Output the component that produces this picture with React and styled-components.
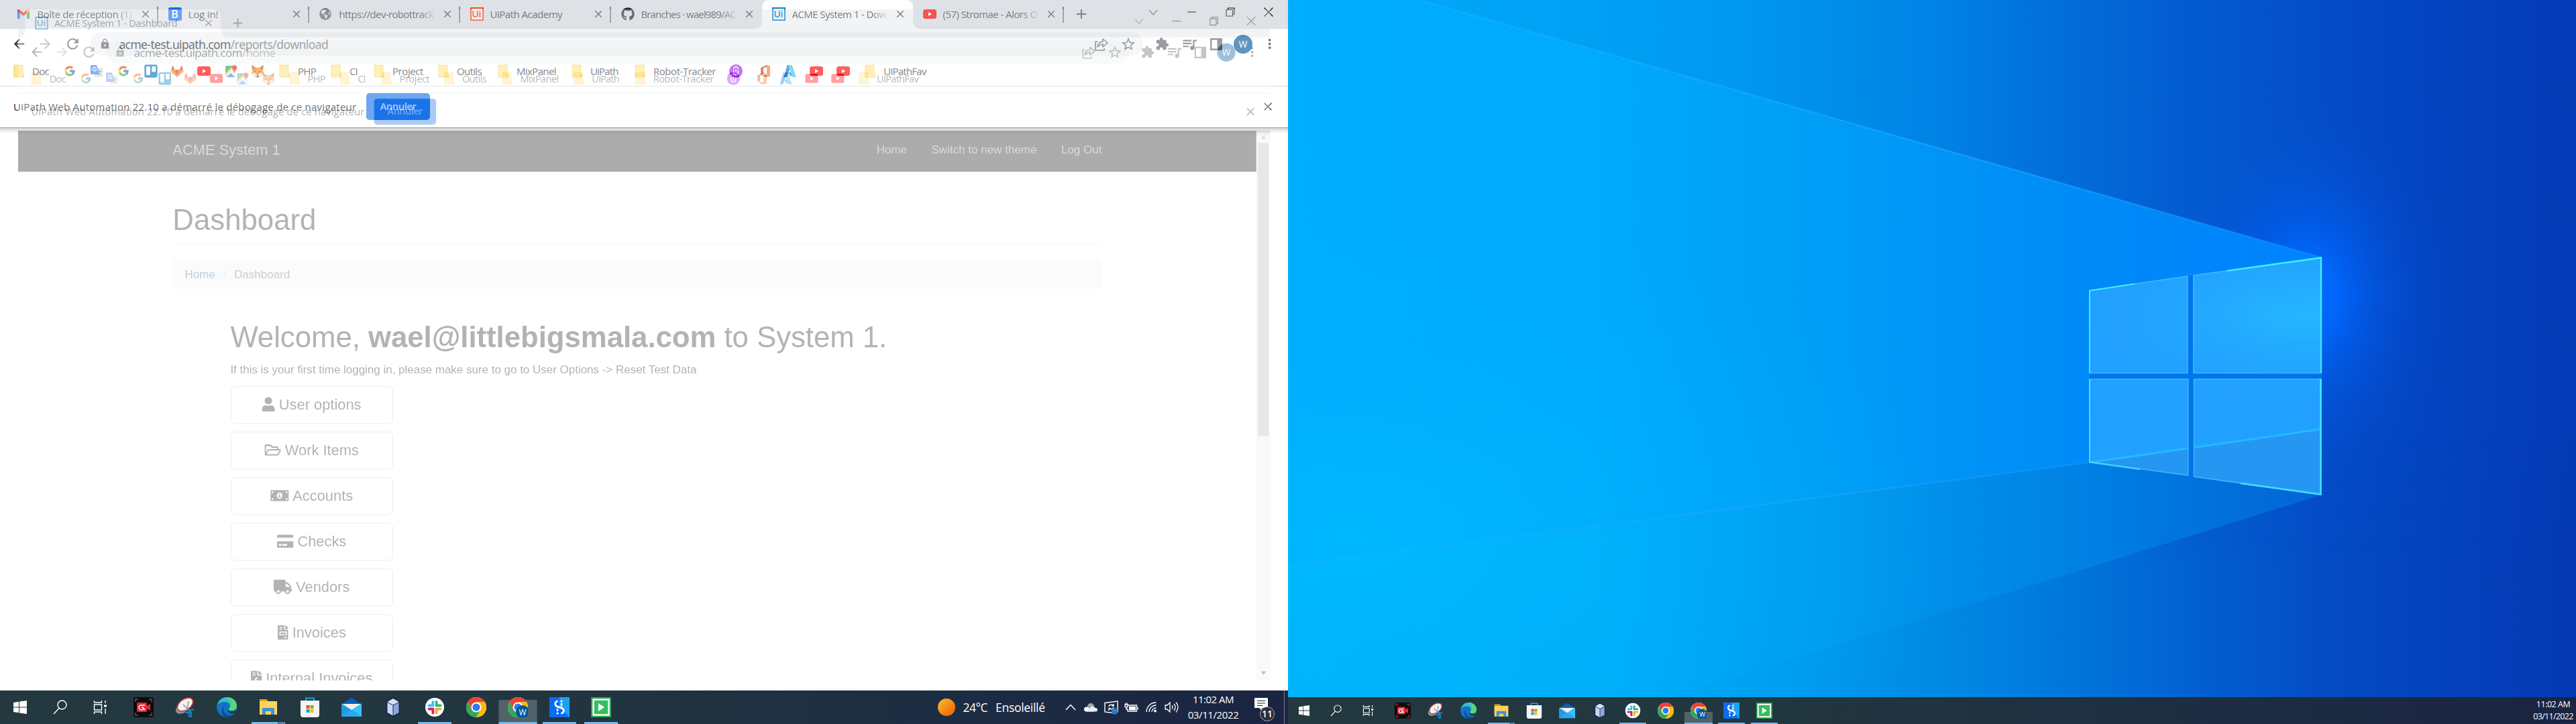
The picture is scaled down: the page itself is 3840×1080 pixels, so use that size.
import React, { useLayoutEffect, useRef, useState } from 'react';
import styled, { createGlobalStyle, css } from 'styled-components';
import {
  FaUser, FaRegFolderOpen, FaMoneyBillAlt, FaCreditCard, FaTruck, FaFileInvoice,
  FaFileInvoiceDollar, FaGithub, FaTrello, FaGlobeAmericas,
} from 'react-icons/fa';
import {
  MdLock, MdRefresh, MdArrowBack, MdArrowForward, MdStarBorder, MdExtension,
  MdQueueMusic, MdMoreVert, MdClose, MdAdd,
} from 'react-icons/md';
import { FcGoogle } from 'react-icons/fc';

const ui = `"Open Sans", "Noto Sans", sans-serif`;
const arial = `"Liberation Sans", Arial, sans-serif`;

const Global = createGlobalStyle`
  *, *::before, *::after { box-sizing: border-box; }
  html, body { margin: 0; padding: 0; }
  body { width: 3840px; height: 1080px; overflow: hidden; background: #fff; font-family: ${ui}; }
  svg { display: block; flex: none; }
`;

/* ---------- text that keeps a given advance width ---------- */

const FitSpan = styled.span`
  display: inline-block;
  flex: none;
  white-space: pre;
`;

function Fit({ w, children }) {
  const ref = useRef(null);
  const [spacing, setSpacing] = useState(0);
  useLayoutEffect(() => {
    const text = String(children);
    const natural = ref.current.offsetWidth;
    setSpacing((w - natural) / text.length);
  }, [w, children]);
  return <FitSpan ref={ref} style={{ letterSpacing: `${spacing}px` }}>{children}</FitSpan>;
}

/* ---------- small logos ---------- */

const Gmail = () => (
  <svg width="18" height="14" viewBox="0 0 18 14">
    <path d="M0 2v11.2c0 .5.3.8.8.8H4V5z" fill="#4285f4" />
    <path d="M18 2v11.2c0 .5-.3.8-.8.8H14V5z" fill="#34a853" />
    <path d="M14 1.2V6l4-3V1.8C18 .2 16.400-.5 15.200.3z" fill="#fbbc04" />
    <path d="M4 6V1.200l5 3.800 5-3.800V6L9 9.800z" fill="#ea4335" />
    <path d="M0 1.800V3l4 3V1.200L2.800.3C1.600-.5 0 .2 0 1.800z" fill="#c5221f" />
  </svg>
);

const BadgeB = styled.span`
  width: 20px; height: 20px; border-radius: 3px; background: #1668f2; color: #fff;
  font: 600 16px/20px ${ui}; text-align: center; flex: none;
`;

const UiSquare = styled.span`
  width: 20px; height: 20px; border: 2px solid ${p => p.$c}; color: ${p => p.$c};
  background: #fff; font: 700 14px/16px ${arial}; text-align: center; flex: none;
`;

const YouTube = () => (
  <svg width="20" height="20" viewBox="0 0 20 20">
    <rect y="3" width="20" height="14" rx="3.500" fill="#f00" />
    <path d="M8 7l5.200 3L8 13z" fill="#fff" />
  </svg>
);

const Folder = () => (
  <svg width="16" height="20" viewBox="0 0 16 20">
    <path d="M1 1h13v14h1.500v4H1z" fill="#ffe68f" stroke="#f5d565" strokeWidth="1" />
    <path d="M13 14.500c1.500-.5 2.500.5 2 4.500h-2z" fill="#ffd95e" />
  </svg>
);

const Translate = () => (
  <svg width="20" height="20" viewBox="0 0 20 20">
    <rect x="7" y="5" width="12" height="14" rx="1" fill="#dadce0" />
    <path d="M10 10h7M13.500 8.500V10m2.500 0c-.5 2.500-3 4.500-4.500 5.500M11.500 11.500c1 2 2.500 3.500 4.500 4" stroke="#607d8b" fill="none" />
    <path d="M1 1h9l4 14H1z" fill="#4285f4" />
    <path d="M9.200 5.700a2.700 2.700 0 1 0 .5 2.300H7.200" stroke="#fff" strokeWidth="1.200" fill="none" />
  </svg>
);

const Gitlab = () => (
  <svg width="20" height="20" viewBox="0 0 20 20">
    <path d="M10 19L13.700 8H6.300z" fill="#e24329" />
    <path d="M10 19L6.300 8H1z" fill="#fc6d26" />
    <path d="M10 19L13.700 8H19z" fill="#fc6d26" />
    <path d="M1 8l-.9 3.200L10 19zM19 8l.9 3.200L10 19z" fill="#fca326" />
    <path d="M1 8L3.600 1l2.700 7zM19 8l-2.600-7-2.700 7z" fill="#e24329" />
  </svg>
);

const Maps = () => (
  <svg width="20" height="20" viewBox="0 0 20 20">
    <rect x="1" y="2" width="15" height="17" rx="2" fill="#34a853" />
    <path d="M1 17L12 5l4 4v8l-2 2H2z" fill="#eceff1" />
    <path d="M3 19l6-6 6 6z" fill="#4285f4" />
    <path d="M1 15L13 3" stroke="#fdd835" strokeWidth="2" />
    <path d="M14.500 1a4 4 0 0 1 4 4c0 3-3.500 4-4 9-.5-5-4-6-4-9a4 4 0 0 1 4-4z" fill="#ea4335" />
    <circle cx="14.500" cy="5" r="1.400" fill="#7b1a12" />
  </svg>
);

const Fox = () => (
  <svg width="20" height="20" viewBox="0 0 20 20">
    <path d="M1 1l6 4h6l6-4-1 9 1 4-4 4-5 2-5-2-4-4 1-4z" fill="#f6851b" />
    <path d="M1 1l6 4-4 3zM19 1l-6 4 4 3z" fill="#b5571b" />
    <path d="M1 14l5-2 3 4v3l-4-1zM19 14l-5-2-3 4v3l4-1z" fill="#eadfd4" />
    <path d="M6 10l2 1.500-2 .5zM14 10l-2 1.500 2 .5zM8.500 17h3l-.5 2H9z" fill="#2b2b33" />
  </svg>
);

const Purple = () => (
  <svg width="20" height="20" viewBox="0 0 20 20">
    <circle cx="10" cy="10" r="10" fill="#a020f0" />
    <path d="M6.500 8.500V12a3.500 3.500 0 0 0 7 0V8.500M10 13V7M6.500 7a3.500 3.500 0 0 1 7 0" fill="none" stroke="#fff" strokeWidth="1.500" />
  </svg>
);

const Office = () => (
  <svg width="16" height="20" viewBox="0 0 16 20">
    <path d="M1 5l9-4 5 1.500v15L10 19l-9-3.500 9 1V4L5 5.500v8L1 15z" fill="#d83b01" />
    <path d="M10 1l5 1.500v15L10 19z" fill="#f0803c" />
  </svg>
);

const Azure = () => (
  <svg width="20" height="20" viewBox="0 0 20 20">
    <path d="M6.500 1h6L6 19H1.500z" fill="#0f6fc0" />
    <path d="M8 12h8l3 7-8-2z" fill="#0078d4" />
    <path d="M8 1h5.500L20 19h-6z" fill="#3cc1f3" />
  </svg>
);

const Share = () => (
  <svg width="22" height="20" viewBox="0 0 22 20" fill="none" stroke="#5f6368" strokeWidth="1.600">
    <path d="M5 6H2v13h13v-3M13 2l7 6-7 6v-4c-4 0-6 1.500-8 4 .5-5 3.500-8 8-8z" strokeLinejoin="round" />
  </svg>
);

const SidePanel = () => (
  <svg width="18" height="18" viewBox="0 0 18 18">
    <path d="M0 0h18v18H0zM2.400 2.400v13.200h8.100V2.400z" fill="#5f6368" fillRule="evenodd" />
  </svg>
);

const icons = {
  gmail: <Gmail />,
  b: <BadgeB>B</BadgeB>,
  globe: <FaGlobeAmericas size={18} color="#5f6368" />,
  uiRed: <UiSquare $c="#fa4616">Ui</UiSquare>,
  uiBlue: <UiSquare $c="#0085ca">Ui</UiSquare>,
  github: <FaGithub size={20} color="#24292f" />,
  youtube: <YouTube />,
  folder: <Folder />,
  google: <FcGoogle size={18} />,
  translate: <Translate />,
  trello: <FaTrello size={22} color="#0079bf" />,
  gitlab: <Gitlab />,
  maps: <Maps />,
  fox: <Fox />,
  purple: <Purple />,
  office: <Office />,
  azure: <Azure />,
};

/* ---------- browser window ---------- */

const Window = styled.section`
  position: absolute;
  inset: 0 auto auto 0;
  width: 1920px;
  height: 1030px;
  display: flex;
  flex-direction: column;
  overflow: hidden;
  background: #fff;
  color: #3c4043;
  ${p => p.$ghost && css`
    opacity: 0.37;
    transform-origin: 0 0;
    transform: translate(27px, 14px) scale(0.972);
  `}
`;

const TabStrip = styled.header`
  height: 43px;
  flex: none;
  display: flex;
  align-items: stretch;
  padding-left: 10.5px;
  background: #dee1e6;
`;

const TabBox = styled.div`
  position: relative;
  width: ${p => p.$w}px;
  flex: none;
  display: flex;
  align-items: center;
  padding: 0 10px 1px 15px;
  font-size: 15px;
  ${p => p.$active && css`
    background: #fff;
    border-radius: 10px 10px 0 0;
    &::before, &::after {
      content: '';
      position: absolute;
      bottom: 0;
      width: 10px;
      height: 10px;
    }
    &::before { left: -10px; background: radial-gradient(circle at 0 0, transparent 9.5px, #fff 10px); }
    &::after { right: -10px; background: radial-gradient(circle at 100% 0, transparent 9.5px, #fff 10px); }
  `}
`;

const TabDivider = styled.i`
  position: absolute;
  right: 0;
  top: 10px;
  width: 1.500px;
  height: 24px;
  background: #80868b;
`;

const IconSlot = styled.span`
  width: ${p => p.$w || 30}px;
  flex: none;
  display: flex;
  align-items: center;
`;

const TabTitle = styled.span`
  flex: 1;
  min-width: 0;
  white-space: nowrap;
  ${p => p.$fade && css`mask-image: linear-gradient(90deg, #000 84%, rgba(0, 0, 0, .12) 100%);`}
`;

const TabClose = styled(MdClose)`
  width: 18px;
  height: 18px;
  margin-left: 10px;
  color: #45494d;
  flex: none;
`;

const NewTab = styled(MdAdd)`
  width: 24px;
  height: 24px;
  margin: 9px 0 0 14px;
  color: #45494d;
`;

const Controls = styled.div`
  display: flex;
  margin: 0 0 0 auto;
  height: 36px;
`;

const Control = styled.span`
  width: 57.500px;
  display: grid;
  place-items: center;
`;

const Toolbar = styled.div`
  height: 45px;
  flex: none;
  display: flex;
  align-items: center;
  background: #fff;
  padding-left: 17px;
`;

const NavIcon = styled.span`
  width: 39.300px;
  flex: none;
  color: ${p => (p.$dim ? '#a8abaf' : p.$soft ? '#5f6368' : '#303336')};
`;

const Omnibox = styled.div`
  width: 1569px;
  height: 35px;
  flex: none;
  display: flex;
  align-items: center;
  border-radius: 18px;
  background: #f1f3f4;
  padding: 0 10px 0 13px;
  font-size: 17.500px;
  color: #202124;
`;

const Path = styled.span`color: #6a6e73;`;

const OmniTail = styled.span`
  margin-left: auto;
  display: flex;
  align-items: center;
  gap: 17px;
  color: #5f6368;
`;

const Extensions = styled.div`
  display: flex;
  align-items: center;
  color: #5f6368;
  margin-left: 9px;
`;

const Ext = styled.span`
  width: 40px;
  display: grid;
  place-items: center;
`;

const Avatar = styled.span`
  width: 28px;
  height: 28px;
  border-radius: 50%;
  background: #01579b;
  color: #fff;
  font-size: 14px;
  line-height: 28px;
  text-align: center;
`;

const Bookmarks = styled.nav`
  height: 41px;
  flex: none;
  display: flex;
  align-items: center;
  padding: 0 0 5px 20px;
  border-bottom: 1px solid #d5d7da;
  background: #fff;
  font-size: 15px;
`;

const Bookmark = styled.span`
  width: ${p => p.$w}px;
  flex: none;
  display: flex;
  align-items: center;
`;

const InfoBar = styled.div`
  height: ${p => p.$h}px;
  flex: none;
  display: flex;
  align-items: center;
  padding: 0 20px 1px;
  background: #fff;
  font-size: 15px;
  color: #202124;
`;

const CancelButton = styled.button`
  width: 95px;
  height: 40px;
  margin-left: 15px;
  padding: 0 0 2px 20px;
  border: 0;
  border-radius: 5px;
  background: #1a73e8;
  color: #fff;
  font: 600 15px ${ui};
  display: flex;
  align-items: center;
`;

const InfoClose = styled(MdClose)`
  width: 20px;
  height: 20px;
  margin-left: auto;
  color: #3c4043;
`;

const Viewport = styled.div`
  position: relative;
  flex: 1;
  min-height: 0;
  display: flex;
  overflow: hidden;
  background: #fff;
  &::before {
    content: '';
    position: absolute;
    z-index: 2;
    inset: 0 0 auto 0;
    height: 10px;
    background: linear-gradient(rgba(0,0,0,.38) 0 1px, rgba(0,0,0,.16) 1.500px, rgba(0,0,0,.05) 6px, transparent);
  }
`;

const leadingTabs = [
  { icon: 'gmail', title: 'Boîte de réception (1)', w: 141, fade: true },
  { icon: 'b', title: 'Log in!', w: 45 },
  { icon: 'globe', title: 'https://dev-robottrack', w: 141, fade: true },
  { icon: 'uiRed', title: 'UiPath Academy', w: 108 },
  { icon: 'github', title: 'Branches · wael989/AC', w: 141, fade: true, last: true },
  { icon: 'uiBlue', title: 'ACME System 1 - Dow', w: 141, fade: true, active: true },
  { icon: 'youtube', title: '(57) Stromae - Alors O', w: 141, fade: true },
];

const ghostTabs = [
  { icon: 'uiBlue', title: 'ACME System 1 - Dashboard', w: 189, active: true },
];

const bookmarks = [
  ['folder', 75, 'Doc', 25], ['google', 39], ['translate', 41], ['google', 39], ['trello', 40],
  ['gitlab', 40], ['youtube', 41], ['maps', 39], ['fox', 42],
  ['folder', 77, 'PHP', 27], ['folder', 64, 'CI', 12], ['folder', 96, 'Project', 46],
  ['folder', 89, 'Outils', 37], ['folder', 110, 'MixPanel', 59], ['folder', 94, 'UiPath', 42],
  ['folder', 141, 'Robot-Tracker', 93], ['purple', 46], ['office', 34], ['azure', 40],
  ['youtube', 40], ['youtube', 42], ['folder', 100, 'UIPathFav', 64],
];

function Browser({ ghost, tabs, tabWidth, path, pathWidth, infoHeight, children }) {
  return (
    <Window $ghost={ghost}>
      <TabStrip>
        {tabs.map(t => (
          <TabBox key={t.title} $w={tabWidth} $active={t.active}>
            <IconSlot>{icons[t.icon]}</IconSlot>
            <TabTitle $fade={t.fade}><Fit w={t.w}>{t.title}</Fit></TabTitle>
            <TabClose />
            {!t.active && !t.last && <TabDivider />}
          </TabBox>
        ))}
        <NewTab />
        <Controls>
          <Control><svg width="14" height="9" viewBox="0 0 14 9" fill="none" stroke="#111"><path d="M1 1l6 7 6-7" /></svg></Control>
          <Control><svg width="13" height="2"><path d="M0 1h13" stroke="#111" strokeWidth="1.300" /></svg></Control>
          <Control><svg width="14" height="14" viewBox="0 0 14 14" fill="none" stroke="#111" strokeWidth="1.200"><path d="M1 3.500h9.500V13H1zM3.500 3.500V1H13v9.500h-2.500" /></svg></Control>
          <Control><svg width="14" height="14" viewBox="0 0 14 14" fill="none" stroke="#111" strokeWidth="1.200"><path d="M.5.500l13 13M13.500.500l-13 13" /></svg></Control>
        </Controls>
      </TabStrip>
      <Toolbar>
        <NavIcon><MdArrowBack size={23} /></NavIcon>
        <NavIcon $dim><MdArrowForward size={23} /></NavIcon>
        <NavIcon $soft><MdRefresh size={25} /></NavIcon>
        <Omnibox>
          <IconSlot $w={29.500}><MdLock size={17} color="#5f6368" /></IconSlot>
          <Fit w={166}>acme-test.uipath.com</Fit>
          <Path><Fit w={pathWidth}>{path}</Fit></Path>
          <OmniTail><Share /><MdStarBorder size={24} /></OmniTail>
        </Omnibox>
        <Extensions>
          <Ext><MdExtension size={21} /></Ext>
          <Ext><MdQueueMusic size={26} /></Ext>
          <Ext><SidePanel /></Ext>
          <Ext><Avatar>W</Avatar></Ext>
          <Ext><MdMoreVert size={23} color="#3c4043" /></Ext>
        </Extensions>
      </Toolbar>
      <Bookmarks>
        {bookmarks.map(([icon, w, label, lw], i) => (
          <Bookmark key={i} $w={w}>
            <IconSlot $w={28}>{icons[icon]}</IconSlot>
            {label && <Fit w={lw}>{label}</Fit>}
          </Bookmark>
        ))}
      </Bookmarks>
      <InfoBar $h={infoHeight}>
        <Fit w={511}>UiPath Web Automation 22.10 a démarré le débogage de ce navigateur</Fit>
        <CancelButton><Fit w={54}>Annuler</Fit></CancelButton>
        <InfoClose />
      </InfoBar>
      <Viewport>{children}</Viewport>
    </Window>
  );
}

/* ---------- ACME page ---------- */

const Page = styled.main`
  flex: 1;
  font-family: ${arial};
  font-size: 17.500px;
  line-height: 25px;
  color: #333;
`;

const NavBar = styled.div`
  height: 63px;
  display: flex;
  align-items: center;
  justify-content: space-between;
  padding: 0 237px 2px;
  background: #222;
  border-bottom: 1px solid #080808;
  color: #9d9d9d;
`;

const Brand = styled.span`font-size: 22.500px;`;

const NavLinks = styled.span`
  display: flex;
  gap: 37.500px;
`;

const Container = styled.div`
  width: 1425px;
  margin: 0 auto;
`;

const Title = styled.h1`
  margin: 0;
  padding: 49px 0 11px;
  font-weight: 400;
  font-size: 45px;
  line-height: 50px;
  border-bottom: 1px solid #eee;
`;

const Breadcrumb = styled.div`
  height: 44.400px;
  margin-top: 25.500px;
  padding: 0 18.750px;
  display: flex;
  align-items: center;
  gap: 12px;
  border-radius: 5px;
  background: #f5f5f5;
  color: #777;
`;

const Crumb = styled.span`color: ${p => p.$c};`;

const Panel = styled.div`
  padding: 50px 0 0 88.500px;
`;

const Welcome = styled.h1`
  margin: 0;
  font-weight: 400;
  font-size: 45px;
  line-height: 50px;
  letter-spacing: -.03px;
`;

const Hint = styled.p`
  margin: 12px 0 12px;
`;

const MenuList = styled.div`
  display: flex;
  flex-direction: column;
  gap: 12.400px;
`;

const MenuButton = styled.div`
  width: 249.500px;
  height: 57.600px;
  flex: none;
  display: flex;
  align-items: center;
  justify-content: center;
  gap: 6px;
  padding-bottom: 2px;
  border: 1.200px solid #ccc;
  border-radius: 7.500px;
  font-size: 22.500px;
  svg {
    width: ${p => p.$iconWidth}px;
    height: 22.500px;
  }
`;

const ScrollBar = styled.div`
  width: 21px;
  flex: none;
  display: flex;
  flex-direction: column;
  align-items: center;
  background: #f1f1f1;
  padding: 8px 0 9px;
`;

const Arrow = styled.i`
  border: 4.500px solid transparent;
  border-top-width: ${p => (p.$down ? 5.500 : 0)}px;
  border-bottom-width: ${p => (p.$down ? 0 : 5.500)}px;
  border-${p => (p.$down ? 'top' : 'bottom')}-color: ${p => (p.$down ? '#505050' : '#a3a3a3')};
`;

const Thumb = styled.i`
  width: 17px;
  height: 450px;
  margin: 6px 0 auto;
  background: #c1c1c1;
`;

const menu = [
  [FaUser, 'User options', 19.7], [FaRegFolderOpen, 'Work Items', 25.3], [FaMoneyBillAlt, 'Accounts', 28.1],
  [FaCreditCard, 'Checks', 25.3], [FaTruck, 'Vendors', 28.1], [FaFileInvoice, 'Invoices', 16.9],
  [FaFileInvoiceDollar, 'Internal Invoices', 16.9],
];

function Dashboard() {
  return (
    <>
      <Page>
        <NavBar>
          <Brand>ACME System 1</Brand>
          <NavLinks><span>Home</span><span>Switch to new theme</span><span>Log Out</span></NavLinks>
        </NavBar>
        <Container>
          <Title>Dashboard</Title>
          <Breadcrumb>
            <Crumb $c="#337ab7">Home</Crumb><Crumb $c="#ccc">/</Crumb><Crumb $c="#777">Dashboard</Crumb>
          </Breadcrumb>
          <Panel>
            <Welcome>Welcome, <b>wael@littlebigsmala.com</b> to System 1.</Welcome>
            <Hint><Fit w={715}>{'If this is your first time logging in, please make sure to go to User Options -> Reset Test Data'}</Fit></Hint>
            <MenuList>
              {menu.map(([Icon, label, iconWidth]) => (
                <MenuButton key={label} $iconWidth={iconWidth}>
                  <Icon preserveAspectRatio="xMidYMid slice" />{label}
                </MenuButton>
              ))}
            </MenuList>
          </Panel>
        </Container>
      </Page>
      <ScrollBar><Arrow /><Thumb /><Arrow $down /></ScrollBar>
    </>
  );
}

/* ---------- taskbar ---------- */

const Bar = styled.footer`
  position: relative;
  height: ${p => (p.$small ? 40 : 50)}px;
  flex: none;
  display: flex;
  align-items: stretch;
  background: linear-gradient(90deg, #23393f 0, #22363f 40%, #1c2c42 75%, #1b2443 100%);
  color: #fff;
`;

const Slot = styled.span`
  position: relative;
  width: ${p => p.$w}px;
  margin-left: ${p => p.$ml || 0}px;
  flex: none;
  display: grid;
  place-items: center;
`;

const Underline = styled.i`
  position: absolute;
  left: 50%;
  bottom: 0;
  width: ${p => (p.$small ? 40 : 50)}px;
  height: ${p => (p.$small ? 2 : 3)}px;
  transform: translateX(-50%);
  background: ${p => (p.$split ? 'linear-gradient(90deg, #76b9ed 79%, #48799f 79%, #5a8fb8)' : '#76b9ed')};
`;

const Highlight = styled.i`
  position: absolute;
  left: 50%;
  bottom: 0;
  width: ${p => (p.$small ? 42 : 57)}px;
  height: ${p => (p.$small ? 18 : 36)}px;
  transform: translateX(-50%);
  background: rgba(255, 255, 255, .22);
  border-bottom: ${p => (p.$small ? 2 : 3)}px solid #76b9ed;
`;

const AppSvg = styled.svg`
  position: relative;
  width: ${p => p.$s}px;
  height: ${p => p.$s}px;
`;

const chromeShapes = (
  <>
    <circle cx="15" cy="15" r="15" fill="#fff" />
    <path d="M2 7.500A15 15 0 0 1 28 7.500H15a7.500 7.500 0 0 0-6.500 11.200z" fill="#ea4335" />
    <path d="M28 7.500A15 15 0 0 1 15 30l6.500-11.300A7.500 7.500 0 0 0 15 7.500z" fill="#fbbc05" />
    <path d="M15 30A15 15 0 0 1 2 7.500l6.500 11.200a7.500 7.500 0 0 0 13 0z" fill="#34a853" />
    <circle cx="15" cy="15" r="7" fill="#fff" />
    <circle cx="15" cy="15" r="5.600" fill="#2f7bee" />
  </>
);

const apps = {
  start: (
    <path d="M5 8l8-1.200v7.700H5zM14 6.600L25 5v9.500H14zM5 15.500h8v7.700L5 22zM14 15.500h11V25l-11-1.600z" fill="#fff" />
  ),
  search: (
    <g fill="none" stroke="#fff" strokeWidth="1.400"><circle cx="17.500" cy="11.500" r="6.500" /><path d="M13 16.500L5 25" /></g>
  ),
  tasks: (
    <g fill="none" stroke="#fff" strokeWidth="1.400"><path d="M5.500 5v3h11V5M5.500 25v-3h11v3M5.500 11h11v8h-11zM22 5v4M22 17v8" /><path d="M20 13h4" strokeWidth="3" /></g>
  ),
  rec: (
    <>
      <rect width="30" height="30" rx="3" fill="#0b0c0d" />
      <path d="M3 7V3h4M23 3h4v4M27 23v4h-4M7 27H3v-4" fill="none" stroke="#d8222a" strokeWidth="1.500" />
      <path d="M5 10q0-2 2-2h11q2 0 2 2v3l5-3v10l-5-3v3q0 2-2 2H7q-2 0-2-2z" fill="#e6263a" />
      <path d="M17 12H11.500a3.400 3.400 0 0 0 0 6.800h2a2 2 0 0 0 0-3.900H12" fill="none" stroke="#fff" strokeWidth="1.500" />
      <path d="M13 15l4.500 4" stroke="#fff" strokeWidth="1.500" />
    </>
  ),
  snip: (
    <>
      <ellipse cx="12.500" cy="15" rx="13" ry="7.500" fill="#8f9597" transform="rotate(-35 12.500 15)" />
      <ellipse cx="15" cy="11" rx="13" ry="8" fill="#f2f2f2" stroke="#d2383a" strokeWidth="1.600" transform="rotate(-35 15 11)" />
      <path d="M12 11l9 9M20 6l-2 14" stroke="#8d9599" strokeWidth="1.500" />
      <g fill="none" stroke="#1d86d0" strokeWidth="2"><ellipse cx="19" cy="21" rx="3.500" ry="1.800" transform="rotate(-25 19 21)" /><ellipse cx="22.500" cy="25.500" rx="1.800" ry="3.500" /><path d="M22 20l6-2" /></g>
    </>
  ),
  edge: (
    <>
      <circle cx="15" cy="15" r="15" fill="#1273c4" />
      <path d="M1 12C3 4 9 0 15 0c9 0 15 6 15 13 0 5-4 7-8 7-3 0-4-1-4-2s2-2 2-5-3-6-8-6C7 7 3 9 1 12z" fill="#35c1c9" />
      <path d="M15 0c9 0 15 6 15 13 0 5-4 7-8 7-3 0-4-1-4-2s2-2 2-5c4-3 0-11-5-13z" fill="#56d878" />
      <path d="M12 12c-5 6 0 14 6 15s10-4 10-4c-3 6-8 7-13 7C7 29 5 17 12 12z" fill="#0c4a94" />
      <path d="M17 18.500c1 2 4 3 7 2.500 2 0 3.500-1 4.500-2 .5 1.500 0 2.500-1 4-3 2-7 2-9 0-2-1.500-2.500-3-1.500-4.500z" fill="#23383f" />
    </>
  ),
  explorer: (
    <>
      <path d="M2 3h10l3 3H2z" fill="#e8a30c" /><path d="M2 6h26v20H2z" fill="#ffd35c" />
      <path d="M6 16h18v10h-5v-5h-8v5H6z" fill="#3a93d8" />
    </>
  ),
  store: (
    <>
      <path d="M9 7V1.500h12V7" fill="none" stroke="#18a3e8" strokeWidth="2" />
      <path d="M1 5h28v21q0 4-4 4H5q-4 0-4-4z" fill="#f4f4f4" />
      <path d="M9.500 12h5v5h-5z" fill="#f25022" /><path d="M15.500 12h5v5h-5z" fill="#7fba00" />
      <path d="M9.500 18h5v5h-5z" fill="#00a4ef" /><path d="M15.500 18h5v5h-5z" fill="#ffb900" />
    </>
  ),
  mail: (
    <>
      <path d="M0 10L15 1l15 9v5H0z" fill="#0a5fb4" /><path d="M0 10h30v19H0z" fill="#1f9be6" />
      <path d="M30 10v19L15 18z" fill="#35c3f5" /><path d="M0 29l15-11 15 11z" fill="#27a9ec" />
      <path d="M1 10h28L15 19z" fill="#f0f0f0" />
    </>
  ),
  box: (
    <>
      <path d="M15 0l10.500 6v18L15 30 4.500 24V6z" fill="#1b2456" />
      <path d="M15 2l8.500 5-8.500 4.500L6.500 7z" fill="#d5e6e8" />
      <path d="M6.500 8l8 4.300V27.500l-8-4.500z" fill="#c6d8f6" /><path d="M23.500 8l-8 4.300V27.500l8-4.500z" fill="#8fa7d6" />
    </>
  ),
  slack: (
    <>
      <circle cx="15" cy="15" r="14" fill="#fff" />
      <g strokeWidth="4" strokeLinecap="round">
        <path d="M12.500 7v5.500M6.500 12.500h6" stroke="#36c5f0" /><path d="M17.500 7v5.500M17.500 12.500h6" stroke="#2eb67d" />
        <path d="M17.500 17.500v6M18 17.500h5.500" stroke="#ecb22e" /><path d="M12.500 17.500v6M6.500 17.500h6" stroke="#e01e5a" />
      </g>
      <path d="M15 5v20M5 15h20" stroke="#fff" strokeWidth="1" />
    </>
  ),
  chrome: chromeShapes,
  chromeW: (
    <>
      {chromeShapes}
      <circle cx="22" cy="22" r="10" fill="#01579b" />
      <text x="22" y="26.500" fontSize="12" fill="#fff" textAnchor="middle" fontFamily={ui}>W</text>
    </>
  ),
  s: (
    <>
      <rect width="30" height="30" fill="#0a6cf0" /><path d="M15 0h15v30L15 15z" fill="#1ea0f4" />
      <path d="M12.500 5.500C6.500 8 8 14 14.500 14.500M17.500 24.500c6-2.500 4.500-8.500-2-9" fill="none" stroke="#fff" strokeWidth="2.800" />
      <path d="M14.500 14q6 1 5.500 5M15.500 16q-6-1-5.500-5" fill="none" stroke="#fff" strokeWidth="1.500" />
      <circle cx="18" cy="6" r="1.600" fill="#fff" /><path d="M18 9v4M12 17v4" stroke="#fff" strokeWidth="2.500" />
      <circle cx="12" cy="24" r="1.600" fill="#fff" />
    </>
  ),
  play: (
    <>
      <rect width="30" height="30" fill="#21a94b" /><path d="M3.500 3.500h23v23h-23z" fill="#35bf5c" stroke="#fff" strokeWidth="2.500" />
      <path d="M11 9l9 6-9 6z" fill="#fff" />
    </>
  ),
};

const pinned = ['rec', 'snip', 'edge', 'explorer', 'store', 'mail', 'box', 'slack', 'chrome', 'chromeW', 's', 'play'];
const running = ['explorer', 'slack', 's', 'play'];

function AppIcon({ name, small }) {
  return <AppSvg $s={small ? 24 : 30} viewBox="0 0 30 30">{apps[name]}</AppSvg>;
}

function AppRow({ small }) {
  const wide = small ? 49 : 62;
  return (
    <>
      {['start', 'search', 'tasks'].map(n => (
        <Slot key={n} $w={small ? 48 : 60}><AppIcon name={n} small={small} /></Slot>
      ))}
      {pinned.map((n, i) => (
        <Slot key={n} $w={wide} $ml={i === 0 ? (small ? 2 : 3) : 0}>
          {n === 'chromeW' && <Highlight $small={small} />}
          {running.includes(n) && <Underline $small={small} $split={n === 'explorer'} />}
          <AppIcon name={n} small={small} />
        </Slot>
      ))}
    </>
  );
}

const Tray = styled.div`
  margin-left: auto;
  display: flex;
  align-items: center;
`;

const Sun = styled.i`
  width: 26px;
  height: 26px;
  border-radius: 50%;
  background: linear-gradient(135deg, #f9c32f, #f3700f 75%);
`;

const Weather = styled.span`
  width: 157.500px;
  padding-left: 12px;
  display: flex;
  gap: 12px;
  font-size: 17.500px;
`;

const TraySlot = styled.span`
  width: ${p => p.$w}px;
  display: grid;
  place-items: center;
`;

const Clock = styled.div`
  width: ${p => (p.$small ? 68 : 106)}px;
  padding-right: ${p => (p.$small ? 0 : 13)}px;
  display: flex;
  flex-direction: column;
  align-items: center;
  font-size: ${p => (p.$small ? 12.500 : 15)}px;
  line-height: ${p => (p.$small ? 18 : 23.500)}px;
`;

const Notice = styled.span`
  position: relative;
  width: 32px;
  height: 44px;
  margin-right: 14px;
  padding: 8px 0 0 2px;
`;

const Count = styled.b`
  position: absolute;
  left: 10px;
  top: 21px;
  width: 22px;
  height: 22px;
  border: 1px solid #a5a9b0;
  border-radius: 50%;
  background: #2c2f36;
  font: 600 14px/19px ${ui};
  text-align: center;
`;

const Edge = styled.i`
  width: 1px;
  height: 50px;
  margin-right: 5px;
  background: #7a8290;
`;

function FullTray() {
  return (
    <Tray>
      <Sun />
      <Weather><Fit w={37}>24°C</Fit><Fit w={74}>Ensoleillé</Fit></Weather>
      <TraySlot $w={30}><svg width="16" height="10" viewBox="0 0 16 10"><path d="M1 9l7-7.500L15 9" fill="none" stroke="#fff" strokeWidth="1.500" /></svg></TraySlot>
      <TraySlot $w={30}>
        <svg width="20" height="14" viewBox="0 0 20 14">
          <path d="M5 7a5 5 0 0 1 10-2l-6 4z" fill="#9aa3ac" /><path d="M3.500 13.500a3.500 3.500 0 0 1 0-7c1 0 2 .3 2.500.8l8 6.200z" fill="#fff" />
          <path d="M4 13.500l5-6q1.500-2 4-2 2.500 0 3.500 2.500 3.500.2 3.500 3 0 2.500-3 2.500z" fill="#e9ecef" />
        </svg>
      </TraySlot>
      <TraySlot $w={30}>
        <svg width="21" height="21" viewBox="0 0 21 21" fill="none" stroke="#fff" strokeWidth="1.400">
          <path d="M1 3.500L20 1v16l-7 1.500L1 17z" /><path d="M7 9c0-3 5-4 7-1M14 5v3h-3M14 10c0 3-5 4-7 1M7 15v-3h3" />
          <circle cx="15.500" cy="16" r="4.800" fill="#2f78c4" stroke="none" />
        </svg>
      </TraySlot>
      <TraySlot $w={30}>
        <svg width="21" height="15" viewBox="0 0 21 15" fill="none" stroke="#fff" strokeWidth="1.300">
          <path d="M5 4h13.500v9H5V9" /><path d="M7 5.700h10v5.800H7z" fill="#fff" stroke="none" /><path d="M20 6.500v4M1 3h4v3.500H1zM2 3V.5M4 3V.5M3 6.500V10h2" />
        </svg>
      </TraySlot>
      <TraySlot $w={31}>
        <svg width="17" height="16" viewBox="0 0 17 16" fill="none" stroke="#fff" strokeWidth="1.300">
          <path d="M1 15A14 14 0 0 1 15.500 1M5 15A10 10 0 0 1 15.500 5M9 15a6 6 0 0 1 6.500-6" /><circle cx="14" cy="13.500" r="1.300" fill="#fff" />
        </svg>
      </TraySlot>
      <TraySlot $w={30}>
        <svg width="22" height="18" viewBox="0 0 22 18" fill="none" stroke="#fff" strokeWidth="1.300">
          <path d="M1 6h3l4-4v14l-4-4H1zM11 6.500q2 2.500 0 5M14 4q4 5 0 10M17 1.500q6 7.500 0 15" />
        </svg>
      </TraySlot>
      <Clock><Fit w={61}>11:02 AM</Fit><Fit w={76}>03/11/2022</Fit></Clock>
      <Notice>
        <svg width="20" height="19" viewBox="0 0 20 19"><path d="M0 0h20v15h-9v4l-4-4H0z" fill="#fff" /><path d="M4 4.500h12M4 8h12M4 11.500h8" stroke="#1b2443" strokeWidth="1.200" /></svg>
        <Count>11</Count>
      </Notice>
      <Edge />
    </Tray>
  );
}

/* ---------- wallpaper ---------- */

const WallSvg = styled.svg`
  flex: none;
  width: 1920px;
  height: 1040px;
`;

function Wallpaper() {
  return (
    <WallSvg viewBox="0 0 1920 1040" preserveAspectRatio="none">
      <defs>
        <linearGradient id="base" x1="0" x2="1920" y1="0" y2="0" gradientUnits="userSpaceOnUse">
          <stop offset="0" stopColor="#00a9fb" /><stop offset=".2" stopColor="#00a3f6" />
          <stop offset=".35" stopColor="#0098f0" /><stop offset=".5" stopColor="#0083e5" />
          <stop offset=".6" stopColor="#026eda" /><stop offset=".7" stopColor="#035bd0" />
          <stop offset=".84" stopColor="#0448c5" /><stop offset="1" stopColor="#043ab5" />
        </linearGradient>
        <linearGradient id="beam" x1="0" x2="1540" y1="0" y2="0" gradientUnits="userSpaceOnUse">
          <stop offset="0" stopColor="#00adff" /><stop offset=".3" stopColor="#00aafc" />
          <stop offset=".5" stopColor="#009ff7" /><stop offset=".65" stopColor="#0093f6" />
          <stop offset=".8" stopColor="#0089f8" /><stop offset="1" stopColor="#0082ff" />
        </linearGradient>
        <linearGradient id="low" x1="0" x2="1540" y1="0" y2="0" gradientUnits="userSpaceOnUse">
          <stop offset="0" stopColor="#00b4fb" /><stop offset=".3" stopColor="#00aef8" />
          <stop offset=".5" stopColor="#009df0" /><stop offset=".75" stopColor="#0083e4" /><stop offset="1" stopColor="#0264d6" />
        </linearGradient>
        <linearGradient id="floor" x1="0" x2="1920" y1="0" y2="0" gradientUnits="userSpaceOnUse">
          <stop offset="0" stopColor="#00b4fb" /><stop offset=".26" stopColor="#00acf7" />
          <stop offset=".4" stopColor="#009aed" /><stop offset=".5" stopColor="#008be5" />
          <stop offset=".6" stopColor="#0078db" /><stop offset=".7" stopColor="#0261d1" />
          <stop offset=".8" stopColor="#044cc5" /><stop offset="1" stopColor="#0438b3" />
        </linearGradient>
        <linearGradient id="fade" x1="0" x2="0" y1="650" y2="850" gradientUnits="userSpaceOnUse">
          <stop offset="0" stopColor="#000" /><stop offset="1" stopColor="#fff" />
        </linearGradient>
        <mask id="lower" maskUnits="userSpaceOnUse" x="0" y="0" width="1920" height="1040">
          <rect width="1920" height="1040" fill="url(#fade)" />
        </mask>
        <radialGradient id="cyan" cx="0" cy="0" r="1" gradientTransform="translate(100 800) scale(900 480)" gradientUnits="userSpaceOnUse">
          <stop offset="0" stopColor="#00bcff" stopOpacity=".75" /><stop offset=".5" stopColor="#00b4ff" stopOpacity=".35" /><stop offset="1" stopColor="#00b0ff" stopOpacity="0" />
        </radialGradient>
        <radialGradient id="glow" cx="0" cy="0" r="1" gradientTransform="translate(1520 440) scale(215 290)" gradientUnits="userSpaceOnUse">
          <stop offset="0" stopColor="#006aff" /><stop offset=".2" stopColor="#0068ff" stopOpacity=".9" />
          <stop offset=".45" stopColor="#0060f4" stopOpacity=".48" /><stop offset=".7" stopColor="#005ae8" stopOpacity=".16" />
          <stop offset="1" stopColor="#0054dc" stopOpacity="0" />
        </radialGradient>
        <radialGradient id="hot" cx="0" cy="0" r="1" gradientTransform="translate(1520 470) scale(300 120)" gradientUnits="userSpaceOnUse">
          <stop offset="0" stopColor="#26c4ff" stopOpacity=".65" /><stop offset="1" stopColor="#26b4ff" stopOpacity="0" />
        </radialGradient>
        <linearGradient id="ray" x1="0" x2="1"><stop offset="0" stopColor="#20b4ff" stopOpacity=".35" /><stop offset=".6" stopColor="#1ca4ff" stopOpacity=".7" /><stop offset="1" stopColor="#1f9dff" stopOpacity=".35" /></linearGradient>
        <linearGradient id="edge" x1="0" x2="0" y1="0" y2="1"><stop offset="0" stopColor="#3cf0ff" /><stop offset="1" stopColor="#3fdcff" /></linearGradient>
        <clipPath id="panes">
          <path d="M1194 432.700L1341.400 411V557H1194zM1349 410L1540.500 383.300V557H1349zM1194 565H1342V710L1194.800 689.700zM1350 565H1540.500V738.300L1350 711.700z" />
        </clipPath>
      </defs>
      <rect width="1920" height="1040" fill="url(#base)" />
      <rect width="1920" height="1040" fill="url(#floor)" mask="url(#lower)" />
      <rect x="1200" width="720" height="1040" fill="url(#glow)" />
      <path d="M196 0L1540 384V738L575 1040H0V0z" fill="url(#low)" />
      <path d="M196 0L1540 384V640L1194 690 0 844V0z" fill="url(#beam)" />
      <rect width="1100" height="1040" fill="url(#cyan)" />
      <path d="M196 0L1540 384" stroke="url(#ray)" strokeWidth="2.500" />
      <path d="M0 844L1194 690" stroke="url(#ray)" strokeWidth="2.500" />
      <path d="M575 1040L1540 738" stroke="#1688f0" strokeOpacity=".2" strokeWidth="1.500" />
      <path d="M1194 432.700L1540.500 383.300V738.300L1194.800 689.700z" fill="#0075ea" />
      <g clipPath="url(#panes)">
        <path d="M1194 383H1541V739H1194z" fill="#22a0ff" />
        <path d="M1194 383H1541V739H1194z" fill="url(#hot)" />
        <path d="M1194 690L1541 640V740H1194z" fill="#2597f2" />
        <path d="M1194 690L1541 640" stroke="#25b9ff" strokeWidth="3" />
      </g>
      <g fill="none" stroke="#4cc0ff" strokeOpacity=".7" strokeWidth="1.500">
        <path d="M1195 433.500L1341 412V556.500H1195zM1350 411L1539.500 384.500V556.500H1350zM1195 565.500H1342V709L1195 689zM1350.500 565.500H1539.500V737L1350.500 711z" />
      </g>
      <g fill="none" stroke="url(#edge)" strokeWidth="2">
        <path d="M1195 557V433.500L1262 423.500M1195 565V689.500L1270 700" />
        <path d="M1540 557V384.500L1400 404" strokeWidth="2.500" /><path d="M1539.500 565V737.500L1420 721" strokeWidth="2.500" />
      </g>
    </WallSvg>
  );
}

/* ---------- screens ---------- */

const Screens = styled.div`
  display: flex;
  width: 3840px;
  height: 1080px;
  overflow: hidden;
`;

const Screen = styled.div`
  position: relative;
  width: 1920px;
  height: 1080px;
  flex: none;
  display: flex;
  flex-direction: column;
  justify-content: flex-end;
  overflow: hidden;
`;

export default function App() {
  return (
    <>
      <Global />
      <Screens>
        <Screen>
          <Browser tabs={leadingTabs} tabWidth={225} path="/reports/download" pathWidth={146} infoHeight={61} />
          <Browser ghost tabs={ghostTabs} tabWidth={300} path="/home" pathWidth={51} infoHeight={56.5}>
            <Dashboard />
          </Browser>
          <Bar><AppRow /><FullTray /></Bar>
        </Screen>
        <Screen>
          <Wallpaper />
          <Bar $small>
            <AppRow small />
            <Tray><Clock $small><Fit w={50}>11:02 AM</Fit><Fit w={59}>03/11/2022</Fit></Clock></Tray>
          </Bar>
        </Screen>
      </Screens>
    </>
  );
}
